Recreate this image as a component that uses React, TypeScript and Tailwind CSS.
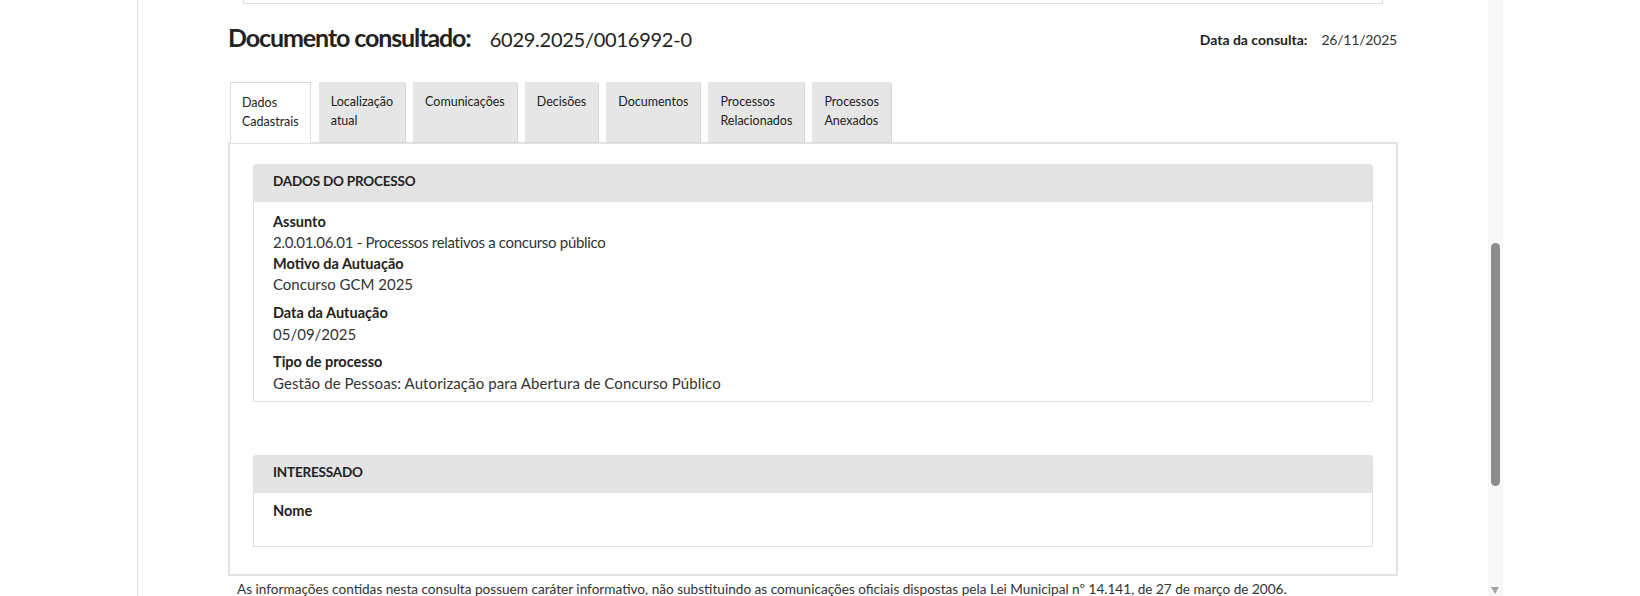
import React from "react";

const tabs = [
  ["Dados", "Cadastrais"],
  ["Localização", "atual"],
  ["Comunicações"],
  ["Decisões"],
  ["Documentos"],
  ["Processos", "Relacionados"],
  ["Processos", "Anexados"],
];

function Field({ label, value, className = "", valueClass = "" }: { label: string; value?: string; className?: string; valueClass?: string }) {
  return (
    <div className={className}>
      <div className="font-bold text-[14.5px] leading-[21px] text-[#222]">{label}</div>
      {value !== undefined && <div className={"text-[15px] leading-[21px] text-[#333] " + valueClass}>{value}</div>}
    </div>
  );
}

export default function App() {
  return (
    <div className="w-full h-[596px] bg-white overflow-hidden font-['Lato',sans-serif] text-[#333]">
      <div className="relative mx-auto w-[1366px] h-[596px] border-l border-[#dcdcdc] flex">
        <div className="flex-1 px-[90px]">
          <div className="mx-[15px] h-[4px] border-x border-b border-[#dedede]" />
          <div className="flex items-center justify-between h-[72px] pb-[5px]">
            <div className="flex items-baseline">
              <span className="font-bold text-[25px] text-[#222] tracking-[-1.1px]">Documento consultado:</span>
              <span className="ml-[19px] text-[20px] text-[#222] tracking-[-0.25px]">6029.2025/0016992-0</span>
            </div>
            <div className="flex items-baseline pr-[1px] pt-[4px]">
              <span className="font-bold text-[14px] text-[#222]">Data da consulta:</span>
              <span className="ml-[14px] text-[14px] text-[#333] tracking-[-0.2px]">26/11/2025</span>
            </div>
          </div>
          <div className="flex gap-[8px] pl-[2px] mt-[6px] relative z-10">
            {tabs.map((t, i) => (
              <div
                key={i}
                className={
                  i === 0
                    ? "h-[61px] px-[11px] pt-[10px] bg-white border border-b-0 border-[#dcdcdc] text-[12.5px] leading-[19px] text-[#222]"
                    : "h-[60px] px-[12px] pt-[10px] bg-[#e6e6e6] text-[12.5px] leading-[19px] text-[#222] shadow-[1px_1px_0_#d6d6d6]"
                }
              >
                {t.map((l, j) => (
                  <div key={j}>{l}</div>
                ))}
              </div>
            ))}
          </div>
          <div className="-mt-[1px] border-2 border-[#e2e2e2] h-[434px] pt-[20px] px-[23px]">
            <div className="border border-[#e0e0e0] rounded-t-[3px]">
              <div className="h-[37px] bg-[#e4e4e4] flex items-center pl-[19px] pb-[5px] font-bold text-[13.5px] tracking-[-0.2px] text-[#222]">
                DADOS DO PROCESSO
              </div>
              <div className="pl-[19px] pt-[9px] pb-[7px]">
                <Field label="Assunto" value="2.0.01.06.01 - Processos relativos a concurso público" valueClass="tracking-[-0.3px]" />
                <Field label="Motivo da Autuação" value="Concurso GCM 2025" className="mb-[7px]" />
                <Field label="Data da Autuação" value="05/09/2025" className="mb-[6px]" valueClass="mt-[1px]" />
                <Field label="Tipo de processo" value="Gestão de Pessoas: Autorização para Abertura de Concurso Público" valueClass="mt-[1px] tracking-[0.1px]" />
              </div>
            </div>
            <div className="mt-[53px] border border-[#e0e0e0] rounded-t-[3px]">
              <div className="h-[37px] bg-[#e4e4e4] flex items-center pl-[19px] pb-[5px] font-bold text-[13.5px] tracking-[-0.2px] text-[#222]">
                INTERESSADO
              </div>
              <div className="pl-[19px] pt-[7px] h-[53px]">
                <Field label="Nome" />
              </div>
            </div>
          </div>
          <div className="pl-[9px] pt-[3px] text-[13.6px] leading-[21px] text-[#333]">
            As informações contidas nesta consulta possuem caráter informativo, não substituindo as comunicações oficiais dispostas pela Lei Municipal nº 14.141, de 27 de março de 2006.
          </div>
        </div>
        <div className="relative w-[15px] h-full bg-[#f8f8f8]">
          <div className="absolute left-[3px] top-[243px] w-[9px] h-[243px] rounded-full bg-[#8c8c8c]" />
          <div className="absolute left-[3px] top-[587px] w-0 h-0 border-l-[4.5px] border-r-[4.5px] border-t-[7px] border-l-transparent border-r-transparent border-t-[#a3a3a3]" />
        </div>
      </div>
    </div>
  );
}
